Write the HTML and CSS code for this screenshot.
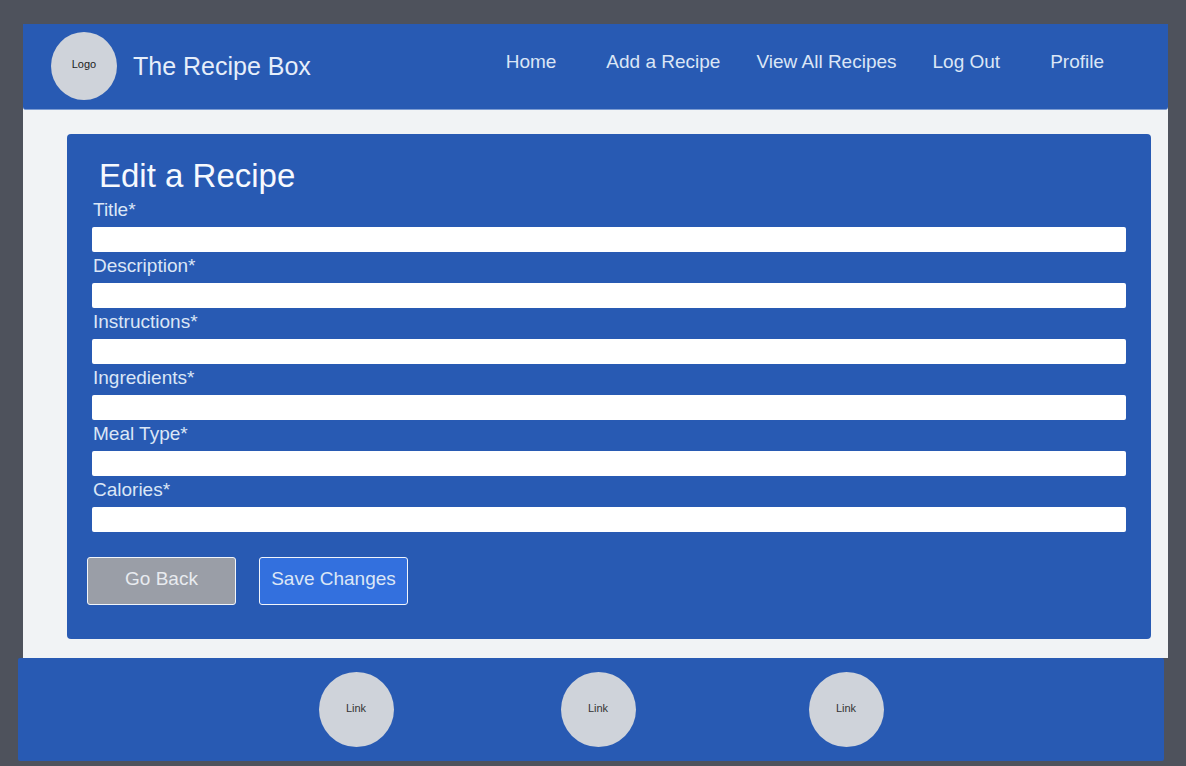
FILE: index.html
```html
<!DOCTYPE html>
<html lang="en">
<head>
  <meta charset="utf-8">
  <meta name="viewport" content="width=device-width, initial-scale=1">
  <title>Edit a Recipe - The Recipe Box</title>
  <link rel="stylesheet" href="styles.css">
</head>
<body>
  <div class="page">
    <header class="header">
      <div class="brand">
        <span class="circle circle-logo">Logo</span>
        <span class="brand-name">The Recipe Box</span>
      </div>
      <nav class="nav">
        <a class="nav-home" href="#">Home</a>
        <a href="#">Add a Recipe</a>
        <a href="#">View All Recipes</a>
        <a href="#">Log Out</a>
        <a class="nav-profile" href="#">Profile</a>
      </nav>
    </header>
    <main class="main">
      <form class="card">
        <h1 class="card-title">Edit a Recipe</h1>
        <div class="fields">
          <div class="field"><label for="title">Title*</label><input id="title" type="text"></div>
          <div class="field"><label for="description">Description*</label><input id="description" type="text"></div>
          <div class="field"><label for="instructions">Instructions*</label><input id="instructions" type="text"></div>
          <div class="field"><label for="ingredients">Ingredients*</label><input id="ingredients" type="text"></div>
          <div class="field"><label for="meal-type">Meal Type*</label><input id="meal-type" type="text"></div>
          <div class="field"><label for="calories">Calories*</label><input id="calories" type="text"></div>
        </div>
        <div class="actions">
          <button class="button button-back" type="button">Go Back</button>
          <button class="button button-save" type="submit">Save Changes</button>
        </div>
      </form>
    </main>
  </div>
  <footer class="footer">
    <a class="circle circle-link" href="#">Link</a>
    <a class="circle circle-link" href="#">Link</a>
    <a class="circle circle-link" href="#">Link</a>
  </footer>
</body>
</html>
```
FILE: styles.css
```css
* {
  box-sizing: border-box;
}

body {
  margin: 0;
  padding: 24px 0 4px;
  background: #4e525c;
  color: #dbe6f6;
  font-family: "Liberation Sans", Arial, sans-serif;
  font-size: 19px;
  line-height: 22px;
}

a {
  color: inherit;
  text-decoration: none;
}

.page {
  margin: 0 18px 0 23px;
  background: #f1f3f5;
}

.header {
  display: flex;
  align-items: center;
  justify-content: space-between;
  padding: 8px 64px 9px 28px;
  background: #285ab3;
  border-bottom: 1px solid #7d9cd2;
  border-radius: 0 0 3px 3px;
}

.brand {
  display: flex;
  align-items: center;
  gap: 16px;
}

.brand-name {
  color: #e6eefa;
  font-size: 25px;
  line-height: 28px;
}

.nav {
  display: flex;
  gap: 36px;
  padding-bottom: 8px;
}

.nav-home {
  margin-right: 14px;
}

.nav-profile {
  margin-left: 14px;
}

.circle {
  display: flex;
  align-items: center;
  justify-content: center;
  padding-bottom: 4px;
  border-radius: 50%;
  background: #cfd3da;
  color: #1c1c1c;
  font-size: 11px;
  line-height: 14px;
}

.circle-logo {
  width: 66px;
  height: 68px;
}

.circle-link {
  width: 75px;
  height: 75px;
  color: #333;
}

.main {
  padding: 24px 17px 19px 44px;
}

.card {
  padding: 22px 20px 34px;
  background: #285ab3;
  border-radius: 4px;
}

.card-title {
  margin: 0;
  padding-left: 12px;
  color: #f6f9fe;
  font-size: 33px;
  font-weight: 400;
  line-height: 40px;
}

.fields {
  padding: 0 5px;
}

.field label {
  display: block;
  padding: 3px 1px 6px;
}

.field input {
  display: block;
  width: 100%;
  height: 25px;
  padding: 0 8px;
  border: 0;
  border-radius: 2px;
  background: #fff;
  font: inherit;
}

.actions {
  display: flex;
  gap: 23px;
  padding-top: 25px;
}

.button {
  width: 149px;
  height: 48px;
  padding: 0 0 4px;
  border: 1px solid #f1f5fb;
  border-radius: 3px;
  color: #dbe6f6;
  font: inherit;
}

.button-back {
  background: #9a9ea7;
  color: #e8ebef;
}

.button-save {
  background: #3370de;
}

.footer {
  display: grid;
  grid-template-columns: 242px 248px 75px;
  justify-content: center;
  margin: 0 22px 0 18px;
  padding: 14px 0 14px 20px;
  background: #285ab3;
  border-radius: 2px;
}
```
